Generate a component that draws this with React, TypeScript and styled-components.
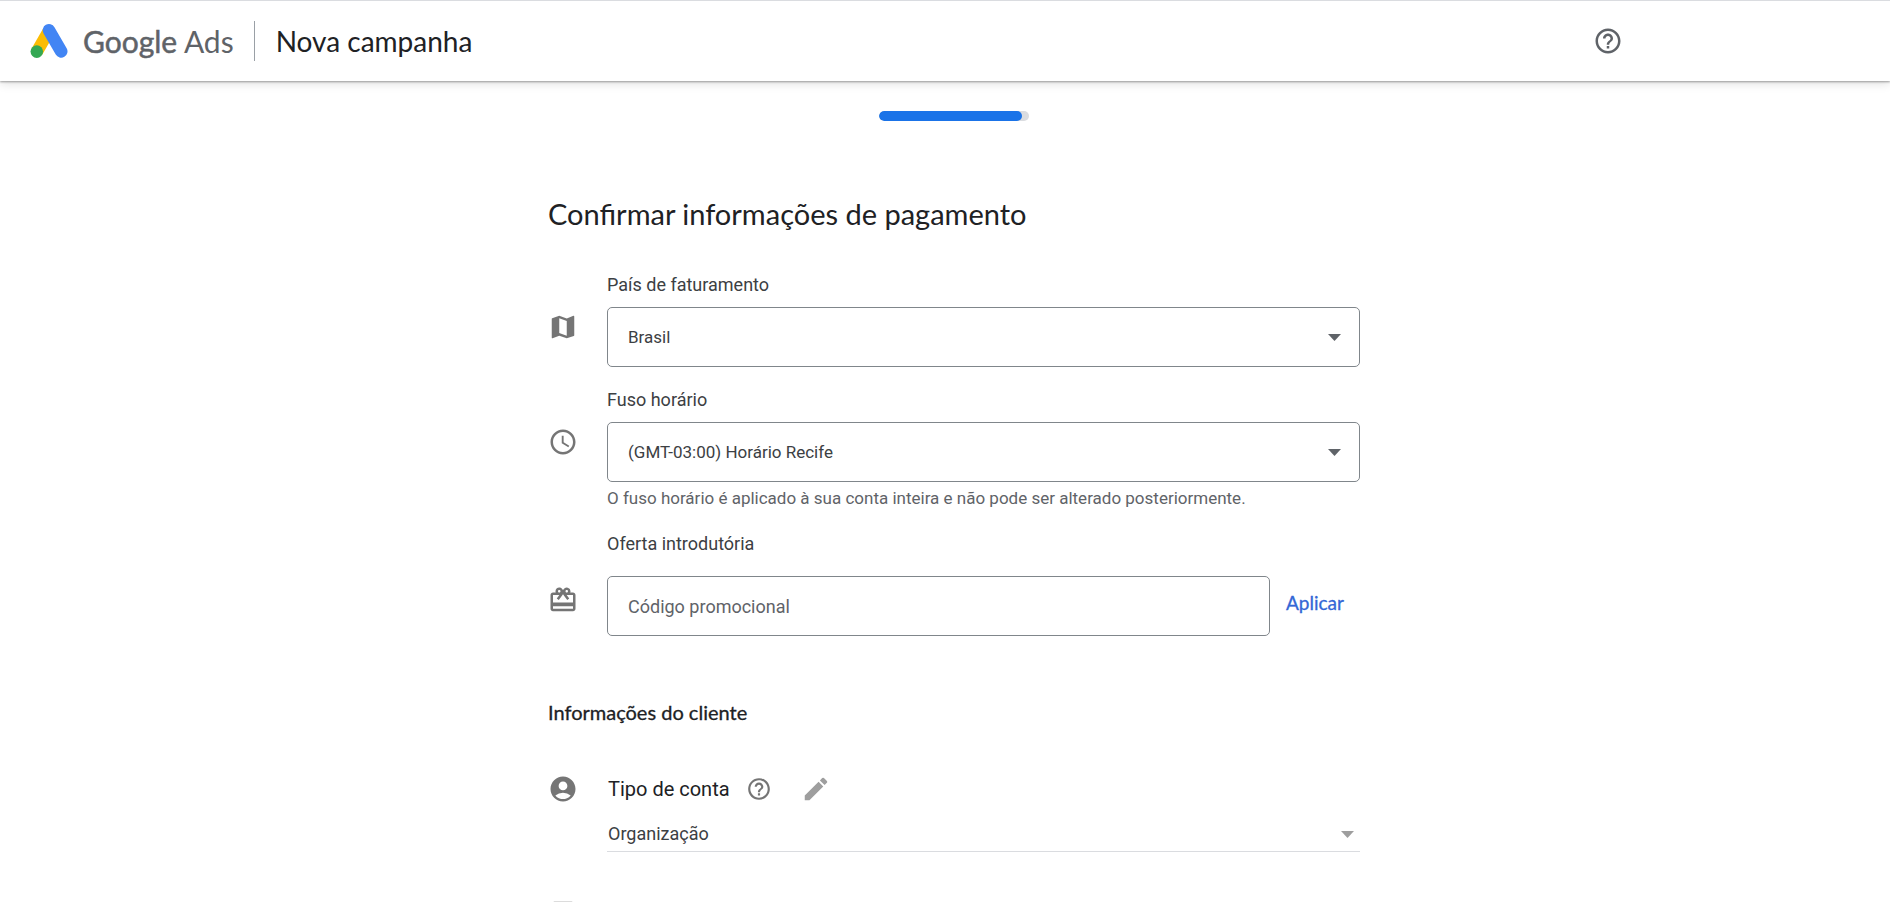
import React from "react";
import styled, { createGlobalStyle } from "styled-components";
import {
  MdAccessTime,
  MdAccountCircle,
  MdArticle,
  MdCardGiftcard,
  MdEdit,
  MdHelpOutline,
  MdMap,
} from "react-icons/md";

const display = `Lato, "Open Sans", sans-serif`;

const GlobalStyle = createGlobalStyle`
  * { box-sizing: border-box; }
  html { scrollbar-width: none; background: #fff; }
  body {
    margin: 0;
    color: #3c4043;
    font-family: Roboto, "Liberation Sans", sans-serif;
    font-size: 18px;
    line-height: 24px;
  }
`;

const Header = styled.header`
  display: flex;
  align-items: center;
  height: 81px;
  padding: 0 264px 0 30px;
  border-top: 1px solid #dadce0;
  background: #fff;
  box-shadow: 0 1px 2px rgba(0, 0, 0, 0.35), 0 2px 10px rgba(0, 0, 0, 0.14);
`;

const Brand = styled.a`
  display: flex;
  align-items: center;
  gap: 15px;
  color: #5f6368;
  font-family: ${display};
  font-size: 30px;
  line-height: 40px;
  text-decoration: none;
`;

const Product = styled.span`
  white-space: nowrap;
`;

const Strong = styled.span`
  -webkit-text-stroke: 0.5px #5f6368;
`;

const HeaderTitle = styled.span`
  margin-left: 20px;
  padding-left: 21px;
  border-left: 1px solid #9aa0a6;
  color: #202124;
  font-family: ${display};
  font-size: 28px;
  line-height: 40px;
`;

const IconButton = styled.button<{ $color?: string }>`
  display: inline-flex;
  align-items: center;
  justify-content: center;
  padding: 0;
  border: 0;
  background: none;
  color: ${(p) => p.$color ?? "#5f6368"};
  cursor: pointer;
`;

const HelpSlot = styled.div`
  display: flex;
  margin-left: auto;
  padding-right: 3px;
`;

const Page = styled.main`
  display: flex;
  flex-direction: column;
  align-items: center;
  padding: 30px 0 0 18px;
`;

const Track = styled.div`
  width: 150px;
  height: 10px;
  border-radius: 5px;
  background: #dadce0;
  overflow: hidden;
`;

const Bar = styled.div<{ $percent: number }>`
  width: ${(p) => p.$percent}%;
  height: 100%;
  border-radius: 5px;
  background: #1a73e8;
`;

const Form = styled.form`
  width: 100%;
  max-width: 812px;
  margin-top: 73px;
`;

const Title = styled.h1`
  margin: 0 0 39px;
  color: #202124;
  font-family: ${display};
  font-size: 29px;
  font-weight: 400;
  line-height: 40px;
`;

const Subtitle = styled.h2`
  margin: 62px 0 48px;
  color: #202124;
  font-family: ${display};
  font-size: 20px;
  font-weight: 400;
  line-height: 28px;
  -webkit-text-stroke: 0.3px #202124;
`;

const Row = styled.div<{ $iconTop: number; $gap?: number }>`
  display: grid;
  grid-template-columns: 59px minmax(0, 1fr);
  margin-bottom: ${(p) => p.$gap ?? 0}px;

  > svg {
    margin-top: ${(p) => p.$iconTop}px;
    color: #757575;
  }
`;

const Label = styled.label<{ $space?: number }>`
  display: block;
  margin-bottom: ${(p) => p.$space ?? 10}px;
`;

const SelectBox = styled.div`
  position: relative;
`;

const Arrow = styled.svg<{ $right: number }>`
  position: absolute;
  top: 50%;
  right: ${(p) => p.$right}px;
  margin-top: -3px;
  pointer-events: none;
`;

const Select = styled.select`
  display: block;
  width: 100%;
  height: 60px;
  padding: 0 48px 0 20px;
  border: 1px solid #80868b;
  border-radius: 5px;
  background: #fff;
  color: #3c4043;
  font: 400 17px/24px Roboto, "Liberation Sans", sans-serif;
  appearance: none;
`;

const PlainSelect = styled(Select)`
  height: 36px;
  padding: 0 32px 0 1px;
  border: 0;
  border-bottom: 1px solid #dadce0;
  border-radius: 0;
  font-size: 18px;
`;

const Hint = styled.p`
  margin: 4px 0 22px;
  color: #5f6368;
  font-size: 17px;
`;

const PromoLine = styled.div`
  display: flex;
  align-items: center;
  gap: 16px;
`;

const PromoInput = styled.input`
  flex: 1;
  min-width: 0;
  height: 60px;
  padding: 0 20px;
  border: 1px solid #80868b;
  border-radius: 5px;
  background: #fff;
  color: #3c4043;
  font: 400 18px/24px Roboto, "Liberation Sans", sans-serif;

  &::placeholder {
    color: #5f6368;
    opacity: 1;
  }
`;

const ApplyButton = styled.button`
  width: 74px;
  padding: 0 0 6px;
  border: 0;
  background: none;
  color: #3367d6;
  font: 400 19px/24px ${display};
  text-align: left;
  -webkit-text-stroke: 0.3px #3367d6;
  cursor: pointer;
`;

const TypeHead = styled.div`
  display: flex;
  align-items: center;
  height: 30px;
  margin-bottom: 12px;
  padding-left: 1px;
`;

const TypeLabel = styled.label`
  margin-right: 16px;
  color: #202124;
  font-size: 20px;
`;

const EditSlot = styled.div`
  display: flex;
  margin-left: 29px;
`;

const AdsLogo = () => (
  <svg width="38" height="36" viewBox="0 0 38 36" aria-hidden="true">
    <path d="M7 28.5 18.5 8.5" stroke="#fbbc04" strokeWidth="12.4" />
    <path d="M19 7.3 31.2 28.4" stroke="#4285f4" strokeWidth="12.6" strokeLinecap="round" />
    <circle cx="6.8" cy="28.6" r="6.3" fill="#34a853" />
  </svg>
);

const Caret = ({ right, color }: { right: number; color: string }) => (
  <Arrow $right={right} width="13" height="7" viewBox="0 0 13 7" aria-hidden="true">
    <path d="M0 0h13L6.500 7z" fill={color} />
  </Arrow>
);

export default function App() {
  return (
    <>
      <GlobalStyle />
      <Header>
        <Brand href="#">
          <AdsLogo />
          <Product>
            <Strong>Google</Strong> Ads
          </Product>
        </Brand>
        <HeaderTitle>Nova campanha</HeaderTitle>
        <HelpSlot>
          <IconButton type="button" aria-label="Ajuda">
            <MdHelpOutline size={30} />
          </IconButton>
        </HelpSlot>
      </Header>
      <Page>
        <Track role="progressbar" aria-valuenow={95} aria-valuemin={0} aria-valuemax={100}>
          <Bar $percent={95} />
        </Track>
        <Form>
          <Title>Confirmar informações de pagamento</Title>
          <Row $iconTop={39} $gap={21}>
            <MdMap size={30} />
            <div>
              <Label htmlFor="country">País de faturamento</Label>
              <SelectBox>
                <Select id="country">
                  <option>Brasil</option>
                </Select>
                <Caret right={19} color="#5f6368" />
              </SelectBox>
            </div>
          </Row>
          <Row $iconTop={39}>
            <MdAccessTime size={30} />
            <div>
              <Label htmlFor="timezone">Fuso horário</Label>
              <SelectBox>
                <Select id="timezone">
                  <option>(GMT-03:00) Horário Recife</option>
                </Select>
                <Caret right={19} color="#5f6368" />
              </SelectBox>
              <Hint>O fuso horário é aplicado à sua conta inteira e não pode ser alterado posteriormente.</Hint>
            </div>
          </Row>
          <Row $iconTop={53}>
            <MdCardGiftcard size={30} />
            <div>
              <Label htmlFor="promo" $space={20}>Oferta introdutória</Label>
              <PromoLine>
                <PromoInput id="promo" type="text" placeholder="Código promocional" />
                <ApplyButton type="button">Aplicar</ApplyButton>
              </PromoLine>
            </div>
          </Row>
          <Subtitle>Informações do cliente</Subtitle>
          <Row $iconTop={0} $gap={46}>
            <MdAccountCircle size={30} />
            <div>
              <TypeHead>
                <TypeLabel htmlFor="account">Tipo de conta</TypeLabel>
                <IconButton type="button" aria-label="Ajuda sobre o tipo de conta" $color="#757575">
                  <MdHelpOutline size={26} />
                </IconButton>
                <EditSlot>
                  <IconButton type="button" aria-label="Editar" $color="#9e9e9e">
                    <MdEdit size={30} />
                  </IconButton>
                </EditSlot>
              </TypeHead>
              <SelectBox>
                <PlainSelect id="account">
                  <option>Organização</option>
                </PlainSelect>
                <Caret right={6} color="#9e9e9e" />
              </SelectBox>
            </div>
          </Row>
          <Row $iconTop={0}>
            <MdArticle size={30} />
          </Row>
        </Form>
      </Page>
    </>
  );
}
